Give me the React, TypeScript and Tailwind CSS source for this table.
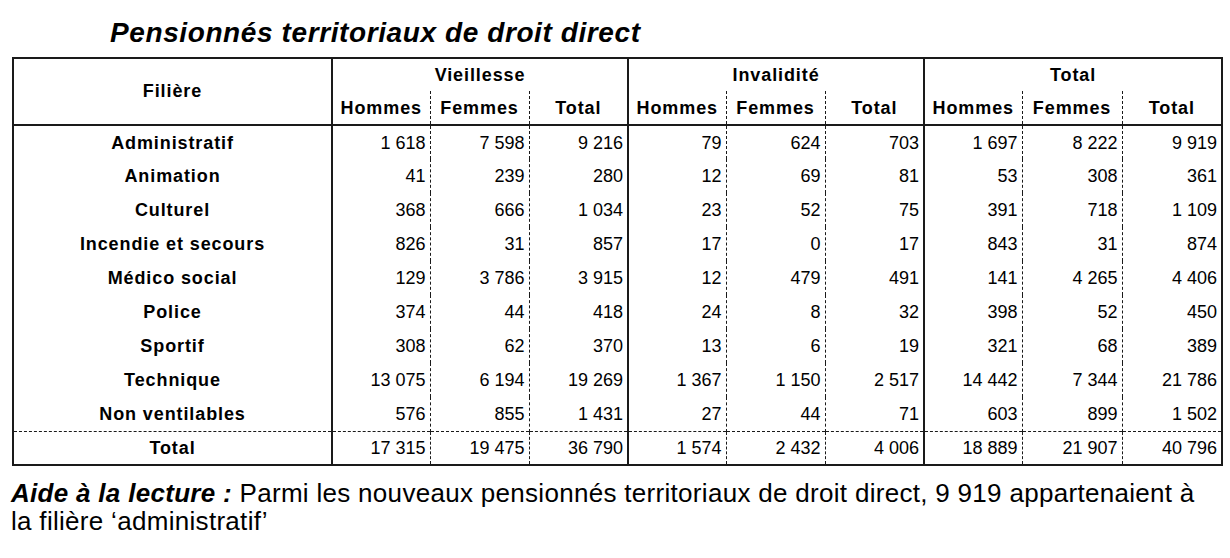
const rows: [string, number[]][] = [
  ["Administratif", [1618, 7598, 9216, 79, 624, 703, 1697, 8222, 9919]],
  ["Animation", [41, 239, 280, 12, 69, 81, 53, 308, 361]],
  ["Culturel", [368, 666, 1034, 23, 52, 75, 391, 718, 1109]],
  ["Incendie et secours", [826, 31, 857, 17, 0, 17, 843, 31, 874]],
  ["Médico social", [129, 3786, 3915, 12, 479, 491, 141, 4265, 4406]],
  ["Police", [374, 44, 418, 24, 8, 32, 398, 52, 450]],
  ["Sportif", [308, 62, 370, 13, 6, 19, 321, 68, 389]],
  ["Technique", [13075, 6194, 19269, 1367, 1150, 2517, 14442, 7344, 21786]],
  ["Non ventilables", [576, 855, 1431, 27, 44, 71, 603, 899, 1502]],
];

const total: number[] = [17315, 19475, 36790, 1574, 2432, 4006, 18889, 21907, 40796];

const groups = ["Vieillesse", "Invalidité", "Total"];
const subs = ["Hommes", "Femmes", "Total"];
const colWidths = ["w-[98px]", "w-[99px]", "w-[99px]", "w-[98px]", "w-[99px]", "w-[99px]", "w-[98px]", "w-[100px]", "w-[100px]"];

// thousands with a plain (non-breaking) space, as in the French tables
const fmt = (n: number) => n.toString().replace(/\B(?=(\d{3})+(?!\d))/g, "\u00a0");

const sepClass = (i: number) =>
  i % 3 === 2 ? "border-r-2 border-solid border-[#1a1a1a]" : "border-r border-dashed border-[#1a1a1a]";

const NumCells = ({ values }: { values: number[] }) => (
  <>
    {values.map((v, i) => (
      <td key={i} className={`h-[34px] p-0 pr-[4px] text-right text-[18px] leading-none ${sepClass(i)}`}>
        {fmt(v)}
      </td>
    ))}
  </>
);

export default function App() {
  return (
    <div className="w-[1230px] h-[558px] bg-white text-black font-['Liberation_Sans',Arial,sans-serif] overflow-hidden">
      <div className="pt-[17px] pl-[110px] text-[28px] leading-[32px] font-bold italic tracking-[0.6px]">
        Pensionnés territoriaux de droit direct
      </div>

      <table className="mt-[8px] ml-[12px] w-[1209px] table-fixed border-collapse border-2 border-[#1a1a1a]">
        <colgroup>
          <col className="w-[319px]" />
          {colWidths.map((w, i) => (
            <col key={i} className={w} />
          ))}
        </colgroup>
        <thead>
          <tr>
            <th
              rowSpan={2}
              className="p-0 text-center text-[18px] font-bold tracking-[0.9px] border-r-2 border-b-2 border-[#1a1a1a]"
            >
              Filière
            </th>
            {groups.map((g) => (
              <th
                key={g}
                colSpan={3}
                className="h-[33px] p-0 text-center text-[18px] font-bold tracking-[0.9px] leading-none border-r-2 border-[#1a1a1a]"
              >
                {g}
              </th>
            ))}
          </tr>
          <tr className="border-b-2 border-solid border-[#1a1a1a]">
            {groups.flatMap((g) =>
              subs.map((s, j) => (
                <th
                  key={g + s}
                  className={`h-[34px] p-0 text-center text-[18px] font-bold tracking-[0.9px] leading-none ${sepClass(j)}`}
                >
                  {s}
                </th>
              ))
            )}
          </tr>
        </thead>
        <tbody>
          {rows.map(([label, values]) => (
            <tr key={label}>
              <td className="h-[34px] p-0 text-center text-[18px] font-bold tracking-[0.9px] leading-none border-r-2 border-[#1a1a1a]">
                {label}
              </td>
              <NumCells values={values} />
            </tr>
          ))}
          <tr className="border-t border-dashed border-[#1a1a1a]">
            <td className="h-[34px] p-0 text-center text-[18px] font-bold tracking-[0.9px] leading-none border-r-2 border-solid border-[#1a1a1a]">
              Total
            </td>
            <NumCells values={total} />
          </tr>
        </tbody>
      </table>

      <p className="mt-[13px] pl-[11px] pr-[20px] text-[26px] leading-[28px] tracking-[0.3px]">
        <span className="font-bold italic">Aide à la lecture :</span> Parmi les nouveaux pensionnés territoriaux de
        droit direct, 9 919 appartenaient à la filière ‘administratif’
      </p>
    </div>
  );
}
